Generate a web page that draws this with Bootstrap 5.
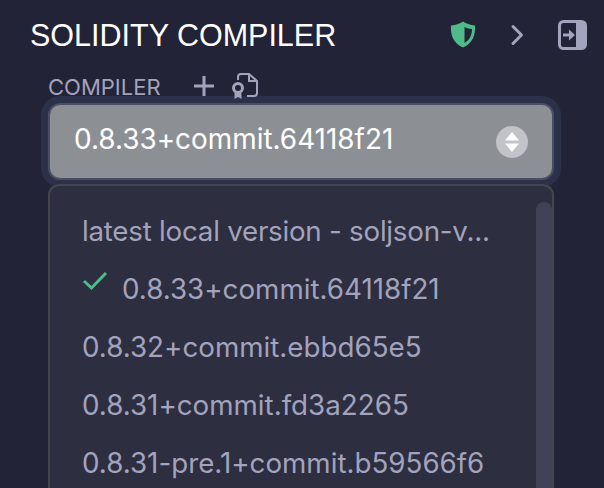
<!DOCTYPE html>
<html lang="en">
<head>
    <meta charset="UTF-8">
    <meta name="viewport" content="width=device-width, initial-scale=1.0">
    <title>Solidity Compiler</title>
    <link rel="stylesheet" href="https://cdn.jsdelivr.net/npm/bootstrap@5.3.0/dist/css/bootstrap.min.css">
    <style>
        html, body { height: 488px; overflow: hidden; }
        body { background: #222336; font-family: "Inter", "Liberation Sans", sans-serif; }
        .panel-head { height: 71px; padding: 0 17px 0 30px; }
        .panel-title { font-family: "Liberation Sans", sans-serif; font-size: 30.5px; font-weight: 400; color: #fff; margin: 0; }
        .head-icons { gap: 34px; margin-bottom: 2px; }
        .compiler-wrap { padding: 0 50px 0 48px; }
        .compiler-label { height: 32px; }
        .compiler-label span { font-size: 22px; color: #a2a3bd; line-height: 1; }
        .label-plus { margin: -3px 0 0 33px; }
        .label-file { margin: -2px 0 0 18px; }
        .version-btn {
            height: 77px; width: 100%; padding: 0 24px 3px 24px; font-size: 27.9px; color: #fff;
            background: #8c9095; border: 2px solid #4a4e63; border-radius: 12px;
            box-shadow: 0 0 0 7px #2a3148;
        }
        .version-btn:hover, .version-btn:active { background: #8c9095; color: #fff; }
        .sort-badge { width: 32px; height: 32px; margin-bottom: -3px; border-radius: 50%; background: #c0c3c8; }
        .version-menu {
            position: relative; margin: 4px 0 0 0; padding: 17px 0 0 0; height: 304px; overflow: hidden;
            background: #2d2e40; border: 2px solid #45454c; border-bottom: 0; border-radius: 11px 11px 0 0;
        }
        .version-item { height: 58px; padding: 0 0 0 32px; font-size: 27.75px; color: #a2a3bd; white-space: nowrap; }
        .version-item:hover { background: transparent; color: #a2a3bd; }
        .item-local { letter-spacing: -.25px; }
        .check-slot { width: 40px; margin: -18px 0 0 0; }
        .menu-thumb { position: absolute; top: 16px; right: 0; bottom: 0; width: 16px; background: #414257; border-radius: 8px 8px 0 0; }
    </style>
</head>
<body>
    <!-- Panel header -->
    <div class="panel-head d-flex align-items-center justify-content-between">
        <h1 class="panel-title">SOLIDITY COMPILER</h1>
        <div class="head-icons d-flex align-items-center">
            <svg width="26" height="27" viewBox="0 0 26 27">
                <path d="M13 .5 C16 2.5 20 4 25 4.5 C25.5 14 23 22 13 26.5 C3 22 .5 14 1 4.5 C6 4 10 2.5 13 .5 Z" fill="#4fbb8b"/>
                <path d="M14.5 6 C17 7.2 19 7.8 22 8.1 C22 14 19.5 19.5 14.5 22 Z" fill="#222336"/>
            </svg>
            <svg width="14" height="22" viewBox="0 0 14 22">
                <path d="M3 2.5 L11.5 11 L3 19.5" fill="none" stroke="#a2a3bd" stroke-width="3" stroke-linecap="round" stroke-linejoin="round"/>
            </svg>
            <svg width="29" height="30" viewBox="0 0 29 30">
                <rect x="1.5" y="1.5" width="26" height="27" rx="4" fill="none" stroke="#a2a3bd" stroke-width="3"/>
                <path d="M18 1 H24 A4 4 0 0 1 28 5 V25 A4 4 0 0 1 24 29 H18 Z" fill="#a2a3bd"/>
                <path d="M5 13.5 H11 V9.5 L17 15 L11 20.5 V16.5 H5 Z" fill="#a2a3bd"/>
            </svg>
        </div>
    </div>

    <div class="compiler-wrap">
        <div class="compiler-label d-flex align-items-center">
            <span>COMPILER</span>
            <svg class="label-plus" width="20" height="20" viewBox="0 0 20 20">
                <path d="M10 0 V20 M0 10 H20" stroke="#a2a3bd" stroke-width="3"/>
            </svg>
            <svg class="label-file" width="26" height="26" viewBox="0 0 26 26">
                <path d="M6 7 V4 A3 3 0 0 1 9 1 H17 L25 8 V20 A3 3 0 0 1 22 23 H15 M17 1 V8 H25" fill="none" stroke="#a2a3bd" stroke-width="2"/>
                <circle cx="6" cy="15" r="4.5" fill="none" stroke="#a2a3bd" stroke-width="3"/>
                <path d="M2.5 20 V26 L6 24 L9.5 26 V20 Z" fill="#a2a3bd"/>
            </svg>
        </div>

        <!-- Version select -->
        <button type="button" class="btn version-btn d-flex align-items-center justify-content-between">
            <span>0.8.33+commit.64118f21</span>
            <span class="sort-badge d-flex align-items-center justify-content-center">
                <svg width="16" height="22" viewBox="0 0 16 22">
                    <path d="M8 1 L15 9.5 H1 Z M8 21 L1 12.5 H15 Z" fill="#fff"/>
                </svg>
            </span>
        </button>

        <div class="version-menu">
            <div class="menu-thumb"></div>
            <a class="version-item item-local d-flex align-items-center text-decoration-none" href="#">latest local version - soljson-v...</a>
            <a class="version-item d-flex align-items-center text-decoration-none" href="#">
                <span class="check-slot d-flex">
                    <svg width="26" height="20" viewBox="0 0 26 20">
                        <path d="M2 10 L9.5 17 L24 2" fill="none" stroke="#4fbb8b" stroke-width="3"/>
                    </svg>
                </span>
                0.8.33+commit.64118f21
            </a>
            <a class="version-item d-flex align-items-center text-decoration-none" href="#">0.8.32+commit.ebbd65e5</a>
            <a class="version-item d-flex align-items-center text-decoration-none" href="#">0.8.31+commit.fd3a2265</a>
            <a class="version-item d-flex align-items-center text-decoration-none" href="#">0.8.31-pre.1+commit.b59566f6</a>
        </div>
    </div>

    <script src="https://cdn.jsdelivr.net/npm/bootstrap@5.3.0/dist/js/bootstrap.bundle.min.js"></script>
</body>
</html>
